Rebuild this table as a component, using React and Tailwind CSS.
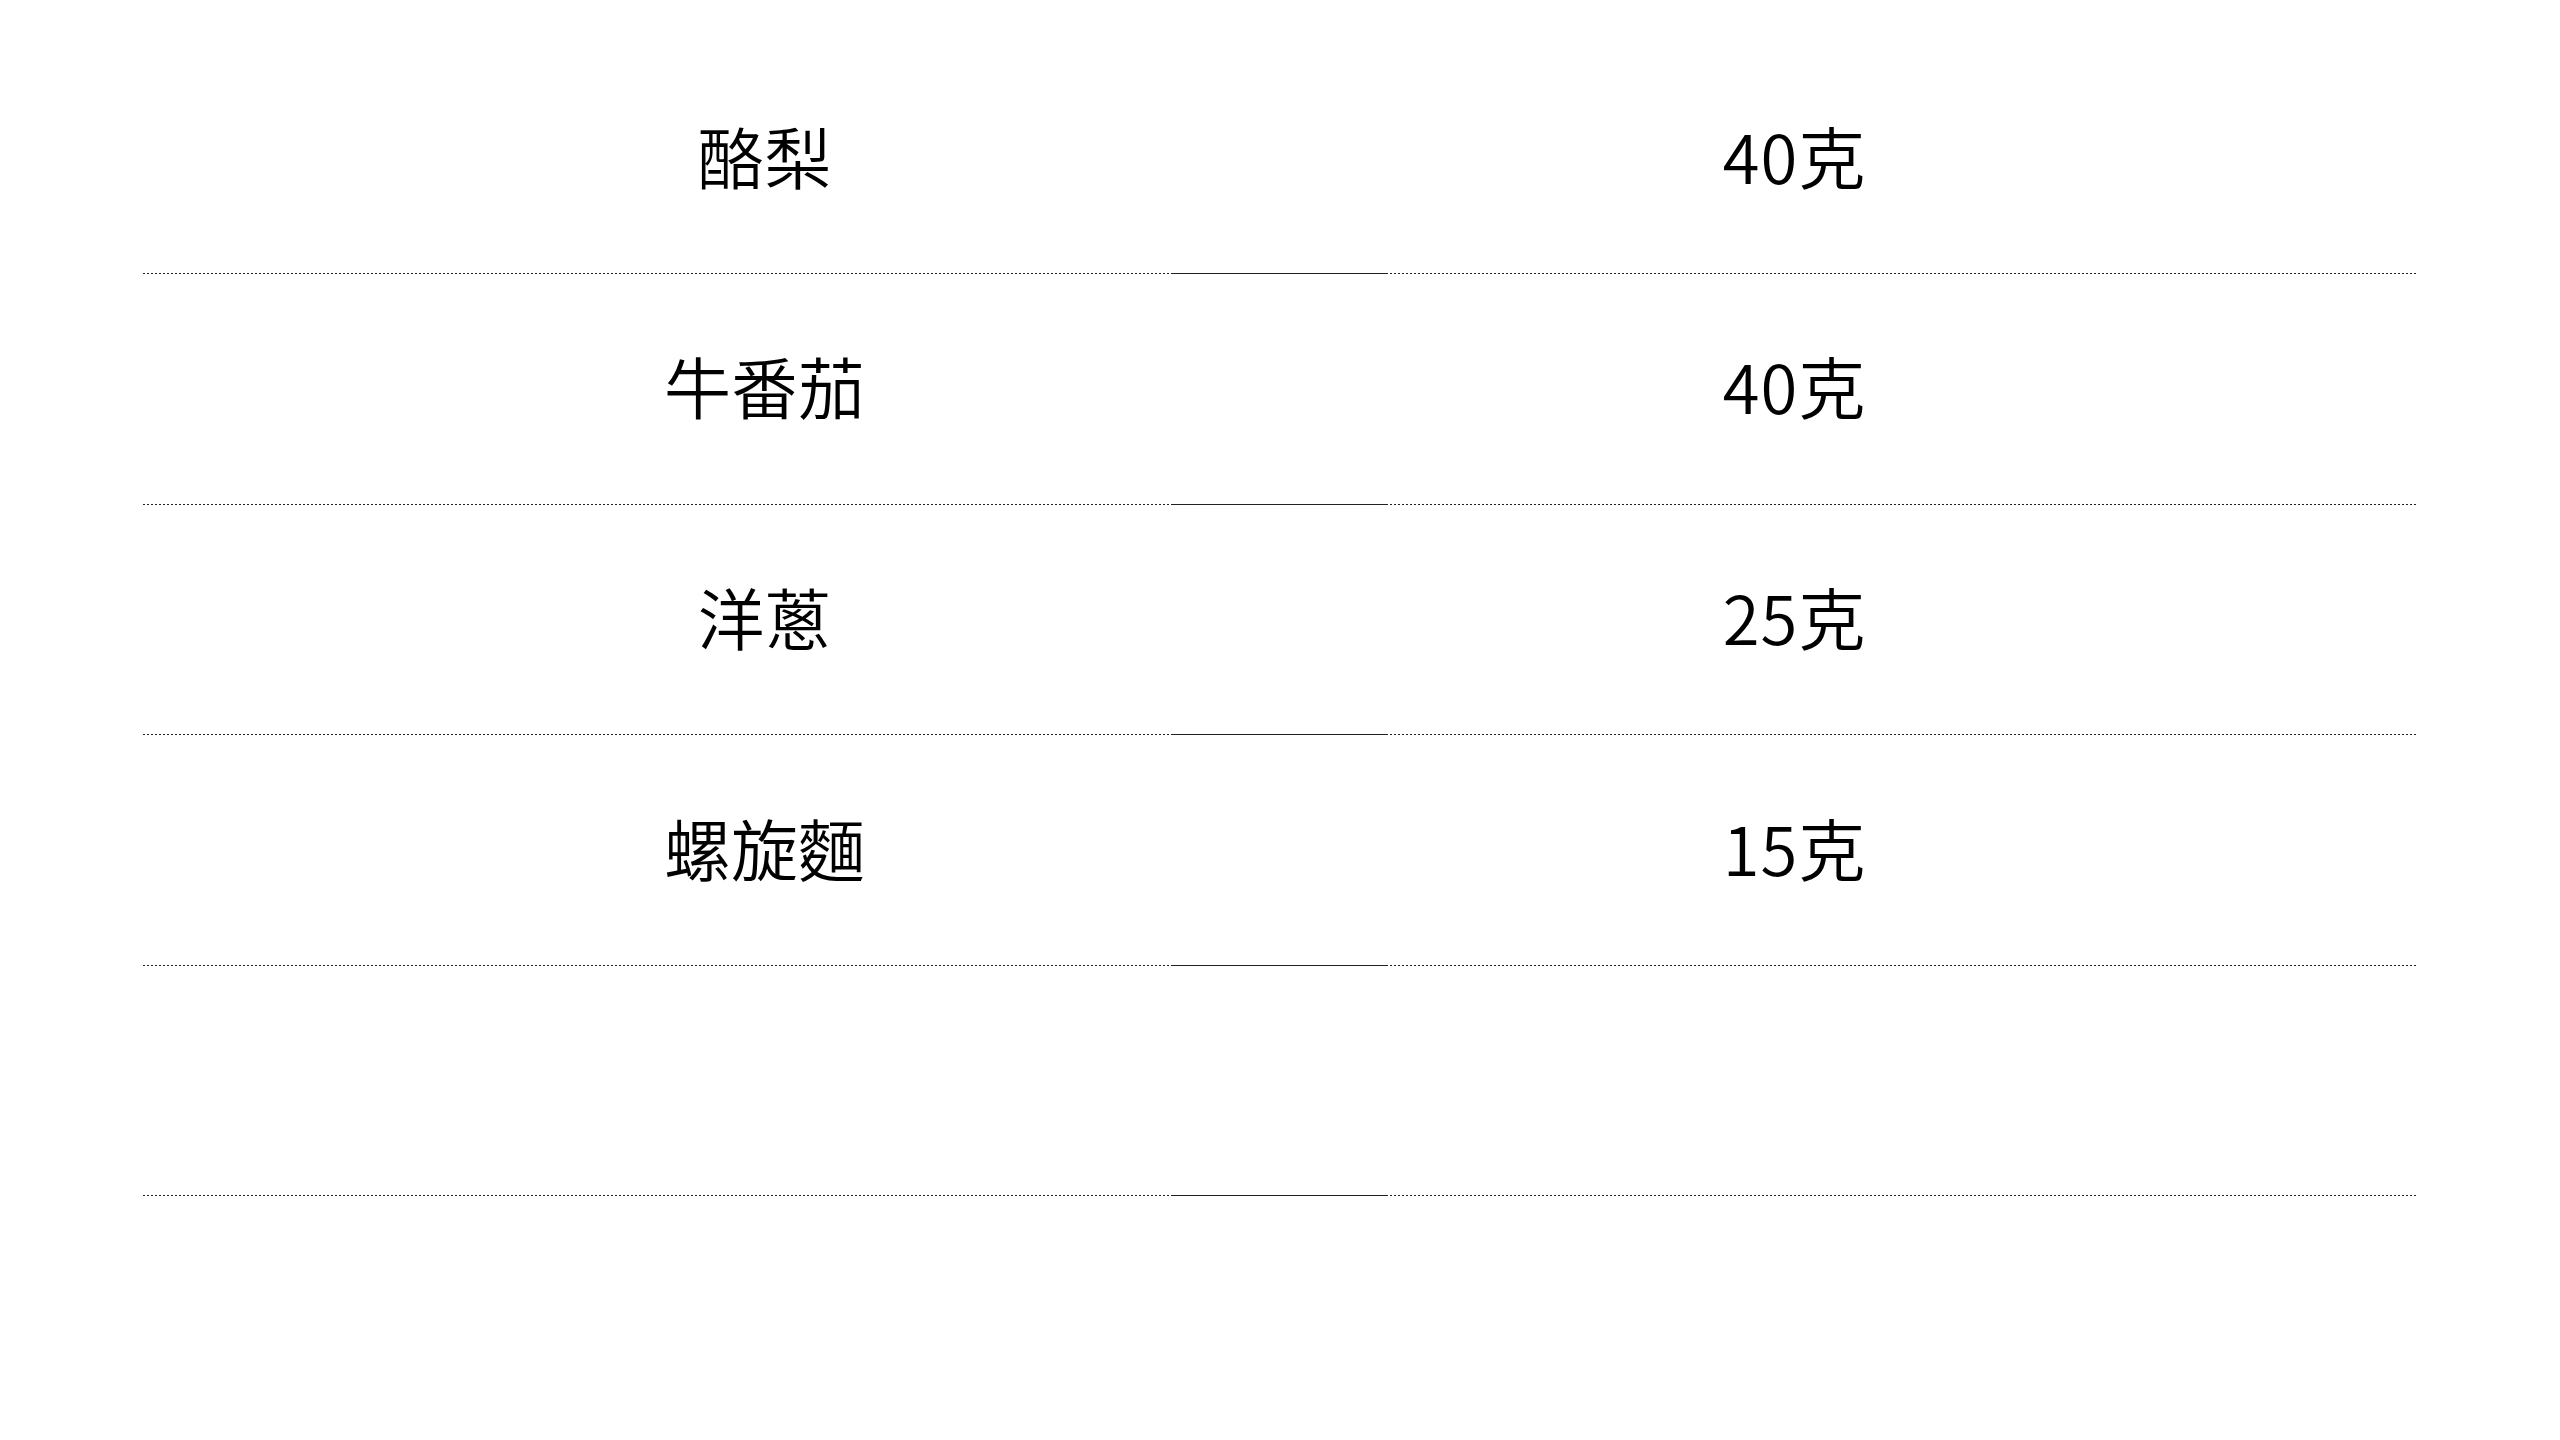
const rows = [
  { name: "酪梨", amount: "40克" },
  { name: "牛番茄", amount: "40克" },
  { name: "洋蔥", amount: "25克" },
  { name: "螺旋麵", amount: "15克" },
  { name: "", amount: "" },
]

function Row({ name, amount }) {
  return (
    <div className="grid grid-cols-[1fr_213px_1fr] grid-rows-[1fr_1px] h-[230.6px]">
      <div className="col-start-1 col-span-2 row-start-1 flex items-center justify-center pb-[8px] text-[67px] leading-none font-[350] text-black">
        {name}
      </div>
      <div className="col-start-2 col-span-2 row-start-1 flex items-center justify-center pb-[8px] text-[67px] tracking-[1px] leading-none font-[350] text-black">
        {amount}
      </div>
      <div className="col-start-1 row-start-2 bg-[linear-gradient(to_right,#222_0_2px,transparent_2px_4px)] bg-[length:4px_1px] bg-repeat-x" />
      <div className="col-start-2 row-start-2 bg-[#222]" />
      <div className="col-start-3 row-start-2 bg-[linear-gradient(to_right,#222_0_2px,transparent_2px_4px)] bg-[length:4px_1px] bg-repeat-x" />
    </div>
  )
}

export default function App() {
  return (
    <main className="min-h-screen bg-white pt-[43.5px] pl-[143px] pr-[144px] font-['Noto_Sans_CJK_TC',sans-serif]">
      {rows.map((r, i) => (
        <Row key={i} name={r.name} amount={r.amount} />
      ))}
    </main>
  )
}
